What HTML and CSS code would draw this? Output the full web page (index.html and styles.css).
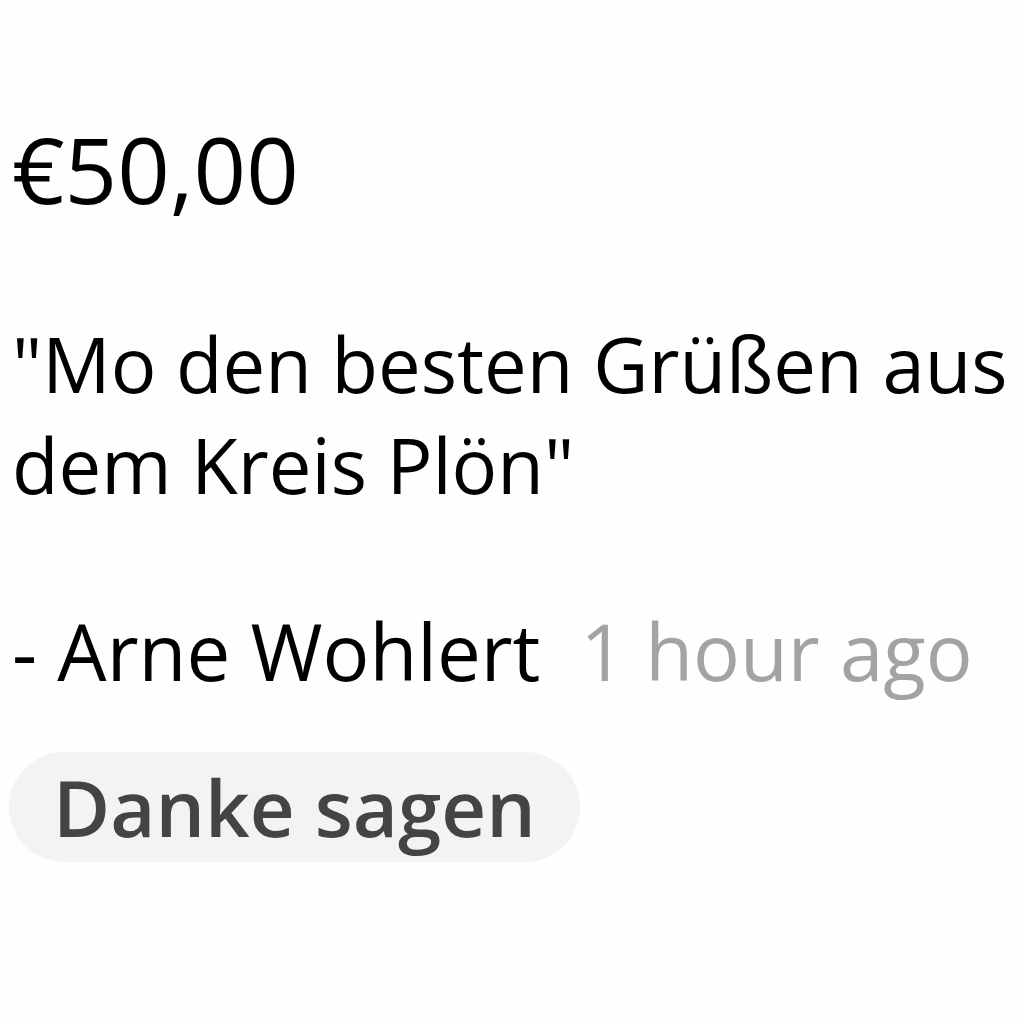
FILE: index.html
```html
<!DOCTYPE html>
<html lang="en">
<head>
    <meta charset="UTF-8">
    <meta name="viewport" content="width=device-width, initial-scale=1.0">
    <title>Spende</title>
    <link rel="stylesheet" href="styles.css">
</head>
<body>
    <div class="donation">
        <div class="amount">€50,00</div>
        <p class="message">"Mo den besten Grüßen aus dem Kreis Plön"</p>
        <div class="author">
            <span class="name">- Arne Wohlert</span>
            <span class="time">1 hour ago</span>
        </div>
        <button type="button" class="thanks">Danke sagen</button>
    </div>
</body>
</html>
```

FILE: styles.css
```css
body {
    margin: 0;
    padding: 0;
    background-color: #fefefe;
    font-family: "Open Sans", Arial, sans-serif;
    color: #000;
}

.donation {
    padding: 109px 12px 0 12px;
    width: 1000px;
}

.amount {
    font-size: 92px;
    font-weight: 500;
    line-height: 120px;
}

.message {
    margin: 84px 0 0 0;
    font-size: 76px;
    line-height: 101px;
}

.author {
    margin-top: 86px;
    font-size: 78px;
    line-height: 100px;
    display: flex;
    gap: 40px;
}

.time {
    color: #a3a3a3;
}

.thanks {
    margin-top: 51px;
    margin-left: -3px;
    padding: 0 44px;
    height: 110px;
    border: none;
    border-radius: 55px;
    background-color: #f3f3f3;
    color: #444;
    font-family: inherit;
    font-size: 78px;
    font-weight: 600;
}
```
